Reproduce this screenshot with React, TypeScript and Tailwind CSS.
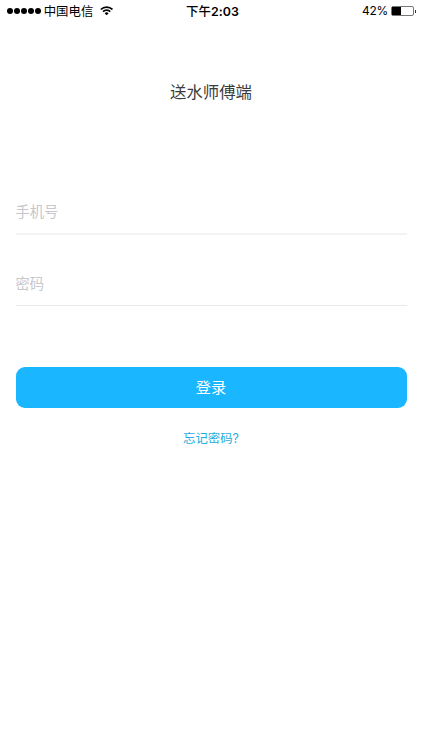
import React from 'react';

interface FieldProps {
  type: string;
  label: string;
  className?: string;
}

function WifiIcon() {
  return (
    <svg className="-mt-[1px] ml-[6.5px] h-[9.5px] w-[13.3px]" viewBox="0 0 14 10" fill="none" stroke="#000" strokeWidth="1.8">
      <path d="M0.9 3.7a8.6 8.6 0 0 1 12.2 0" />
      <path d="M3.2 6a5.4 5.4 0 0 1 7.6 0" />
      <path d="M7 9.8 4.9 7.7a3 3 0 0 1 4.2 0z" fill="#000" stroke="none" />
    </svg>
  );
}

function StatusBar() {
  return (
    <div className="grid h-[22px] grid-cols-3 items-center pr-[6px] pl-[7px] text-[12.4px] leading-[20px] text-black">
      <div className="flex items-center whitespace-nowrap">
        <div className="flex gap-[1.2px]">
          {[0, 1, 2, 3, 4].map((i) => (
            <span key={i} className="h-[5.8px] w-[5.8px] rounded-full bg-black" />
          ))}
        </div>
        <span className="ml-[3px] pt-[2px]">中国电信</span>
        <WifiIcon />
      </div>
      <div className="pt-[2px] pl-[2px] text-center font-semibold tracking-[0.1px] whitespace-nowrap">
        <span className="font-medium">下午</span>2:03
      </div>
      <div className="flex items-center justify-end">
        <span className="text-[11.9px] tracking-[-0.2px]">42%</span>
        <div className="ml-[3px] h-[10px] w-[23px] rounded-[2px] border border-[#777]">
          <div className="h-full w-[9px] bg-black" />
        </div>
        <span className="ml-[1px] h-[3px] w-[1px] bg-[#333]" />
      </div>
    </div>
  );
}

function Field({ type, label, className = '' }: FieldProps) {
  return (
    <input
      type={type}
      placeholder={label}
      className={`block w-full bg-transparent p-0 text-[14.3px] text-[#333] outline-none placeholder:text-[#c7c7cd] ${className}`}
    />
  );
}

export default function App() {
  return (
    <div className="min-h-[750px] w-full bg-white font-['Inter','Noto_Sans_CJK_SC',sans-serif]">
      <StatusBar />
      <h1 className="mt-[58px] text-center text-[16.4px] leading-[24px] font-normal text-[#3c3c3c]">送水师傅端</h1>
      <form className="px-[15.5px] pt-[85px]" onSubmit={(e) => e.preventDefault()}>
        <Field type="tel" label="手机号" className="h-[46px] border-b-2 border-[#f3f3f4]" />
        <Field type="password" label="密码" className="mt-[27px] h-[44px] border-b border-[#e9e9eb]" />
        <button type="submit" className="mt-[61px] block h-[40.5px] w-full rounded-[9px] bg-[#1ab6ff] pt-[2px] text-[15.2px] text-white">
          登录
        </button>
        <a href="#" className="mt-[21px] block text-center text-[12.4px] leading-[20px] text-[#1fadde]">忘记密码?</a>
      </form>
    </div>
  );
}
